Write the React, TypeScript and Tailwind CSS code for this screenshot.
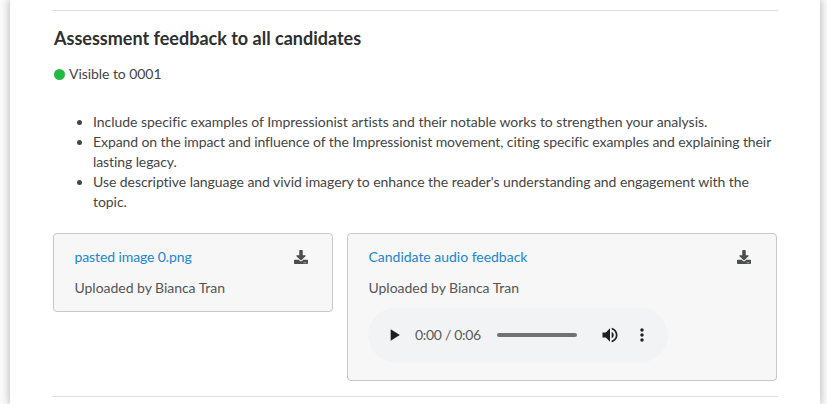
import React from "react";
import { FaDownload } from "react-icons/fa";
import { MdPlayArrow, MdVolumeUp, MdMoreVert } from "react-icons/md";

const feedback = [
  {
    text: "Include specific examples of Impressionist artists and their notable works to strengthen your analysis.",
    tracking: "tracking-[-0.03px]",
  },
  {
    text: "Expand on the impact and influence of the Impressionist movement, citing specific examples and explaining their lasting legacy.",
    tracking: "tracking-[-0.09px]",
  },
  {
    text: "Use descriptive language and vivid imagery to enhance the reader's understanding and engagement with the topic.",
    tracking: "tracking-[-0.055px]",
  },
];

function AudioPlayer() {
  return (
    <div className="mt-[10px] flex h-[54px] w-[300px] items-center rounded-full bg-[#f1f3f4] text-[#1f1f1f]">
      <MdPlayArrow className="ml-4 size-5 shrink-0" />
      <span className="ml-[11px] w-[82px] shrink-0 text-sm leading-5 tracking-[-0.3px] text-[#5a5b5b]">0:00 / 0:06</span>
      <div className="h-1 w-20 shrink-0 rounded-full bg-[#707272]" />
      <MdVolumeUp className="ml-[23px] size-5 shrink-0" />
      <MdMoreVert className="ml-3 size-5 shrink-0" />
    </div>
  );
}

function Attachment({
  title,
  className,
  linkClassName,
  children,
}: {
  title: string;
  className: string;
  linkClassName: string;
  children?: React.ReactNode;
}) {
  return (
    <section className={`rounded border border-[#c6c7c8] bg-[#f7f7f7] pl-5 pt-[13px] ${className}`}>
      <div className="flex h-5 items-center justify-between">
        <a className={`ml-[0.5px] text-[#2185d0] ${linkClassName}`}>{title}</a>
        <FaDownload className="size-[14px] text-[#4c4d4d]" />
      </div>
      <p className="ml-[0.5px] mt-[11px] tracking-[-0.03px] text-[#555656]">Uploaded by Bianca Tran</p>
      {children}
    </section>
  );
}

export default function App() {
  return (
    <div className="h-[404px] overflow-hidden bg-[#fbfbfb] pl-[10px] pr-[7px] font-['Lato',sans-serif] text-sm leading-5 text-[#444546]">
      <main className="h-full bg-white pl-[42px] pr-[42px] pt-[10px] shadow-[0_0_8px_1px_rgba(0,0,0,0.26)]">
        <div className="h-px bg-[#dededf]" />
        <h2 className="ml-[2px] mt-[15px] text-lg font-bold leading-6 text-[#2e2f30]">
          Assessment feedback to all candidates
        </h2>
        <div className="ml-[2px] mt-[14px] flex items-center">
          <span className="mr-1 size-[11px] rounded-full bg-[#21ba45]" />
          <span className="tracking-[-0.06px]">Visible to 0001</span>
        </div>
        <ul className="ml-[41px] mt-[28px] list-disc">
          {feedback.map((item) => (
            <li key={item.text} className={item.tracking}>{item.text}</li>
          ))}
        </ul>
        <div className="ml-px mr-px mt-[21px] flex items-start gap-[14px]">
          <Attachment title="pasted image 0.png" className="h-[79px] w-[280px] pr-[24px]" linkClassName="tracking-[-0.1px]" />
          <Attachment title="Candidate audio feedback" className="h-[148px] w-[430px] pr-[25px]" linkClassName="tracking-[-0.02px]">
            <AudioPlayer />
          </Attachment>
        </div>
        <div className="mt-[15px] h-px bg-[#dededf]" />
      </main>
    </div>
  );
}
